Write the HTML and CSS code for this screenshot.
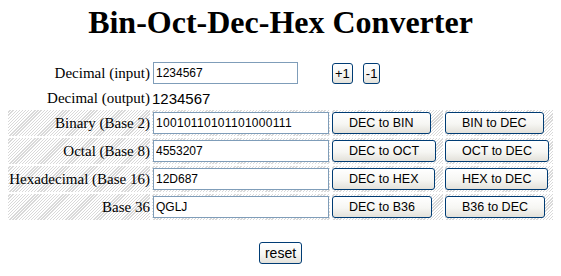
FILE: index.html
```html
<!DOCTYPE html>
<html lang="en">
<head>
    <meta charset="UTF-8">
    <title>Bin-Oct-Dec-Hex Converter</title>
    <link rel="stylesheet" href="styles.css">
</head>
<body>
<h1 class="title">Bin-Oct-Dec-Hex Converter</h1>
<form class="converter" onsubmit="return false">
    <div class="row">
        <label class="cell label">Decimal (input)</label>
        <div class="cell"><input class="field field-short" type="text" value="1234567"></div>
        <div class="cell step">
            <button class="btn btn-small" type="button">+1</button>
            <button class="btn btn-small" type="button">-1</button>
        </div>
    </div>
    <div class="row row-output">
        <span class="cell label">Decimal (output)</span>
        <span class="cell output">1234567</span>
    </div>
    <div class="row hatch">
        <label class="cell label">Binary (Base 2)</label>
        <div class="cell"><input class="field field-bin" type="text" value="10010110101101000111"></div>
        <div class="cell"><button class="btn" type="button">DEC to BIN</button></div>
        <div class="cell"><button class="btn" type="button">BIN to DEC</button></div>
    </div>
    <div class="row hatch">
        <label class="cell label">Octal (Base 8)</label>
        <div class="cell"><input class="field" type="text" value="4553207"></div>
        <div class="cell"><button class="btn" type="button">DEC to OCT</button></div>
        <div class="cell"><button class="btn" type="button">OCT to DEC</button></div>
    </div>
    <div class="row hatch">
        <label class="cell label">Hexadecimal (Base 16)</label>
        <div class="cell"><input class="field" type="text" value="12D687"></div>
        <div class="cell"><button class="btn" type="button">DEC to HEX</button></div>
        <div class="cell"><button class="btn" type="button">HEX to DEC</button></div>
    </div>
    <div class="row hatch">
        <label class="cell label">Base 36</label>
        <div class="cell"><input class="field" type="text" value="QGLJ"></div>
        <div class="cell"><button class="btn" type="button">DEC to B36</button></div>
        <div class="cell"><button class="btn" type="button">B36 to DEC</button></div>
    </div>
</form>
<div class="reset-bar">
    <button class="btn btn-reset" type="button">reset</button>
</div>
</body>
</html>
```

FILE: styles.css
```css
* {
    margin: 0;
    padding: 0;
    box-sizing: border-box;
}

body {
    padding: 0 8px;
    background-color: #fff;
    color: #000;
    font-family: "Liberation Serif", "Times New Roman", serif;
}

.title {
    margin-top: 4px;
    font-size: 32px;
    font-weight: bold;
    text-align: center;
}

.converter {
    display: flex;
    flex-direction: column;
    gap: 2px;
    margin-top: 19px;
}

.row {
    display: grid;
    grid-template-columns: 142px 178px 111px 108px;
    column-gap: 2px;
    height: 26px;
}

.row-output {
    height: 20px;
}

.cell {
    display: flex;
    align-items: center;
}

.hatch .cell {
    background: repeating-linear-gradient(135deg, #fff 0, #fff 1.3px, #d9d9d9 1.3px, #d9d9d9 2.2px);
}

.label {
    justify-content: flex-end;
    font-size: 15px;
    white-space: nowrap;
}

.output {
    font-family: "Liberation Sans", Arial, sans-serif;
    font-size: 15px;
}

.field {
    width: 176px;
    height: 22px;
    margin-left: 1px;
    padding: 0 2px;
    border: 1px solid #7f9db9;
    background-color: #fff;
    font-family: "Liberation Sans", Arial, sans-serif;
    font-size: 12px;
    color: #000;
    outline: none;
}

.field-short {
    width: 145px;
}

.field-bin {
    letter-spacing: 0.3px;
}

.step {
    gap: 10px;
}

.btn {
    height: 22px;
    padding: 0 16px;
    border: 1px solid #003c74;
    border-radius: 3px;
    background: linear-gradient(#ffffff, #f6f6f3 55%, #e3e1da);
    font-family: "Liberation Sans", Arial, sans-serif;
    font-size: 12.5px;
    color: #000;
    white-space: nowrap;
    cursor: pointer;
}

.btn-small {
    height: 21px;
    padding: 0 2px;
    font-size: 13px;
}

.reset-bar {
    margin-top: 22px;
    text-align: center;
}

.btn-reset {
    padding: 0 5px;
    font-size: 14px;
}
```
